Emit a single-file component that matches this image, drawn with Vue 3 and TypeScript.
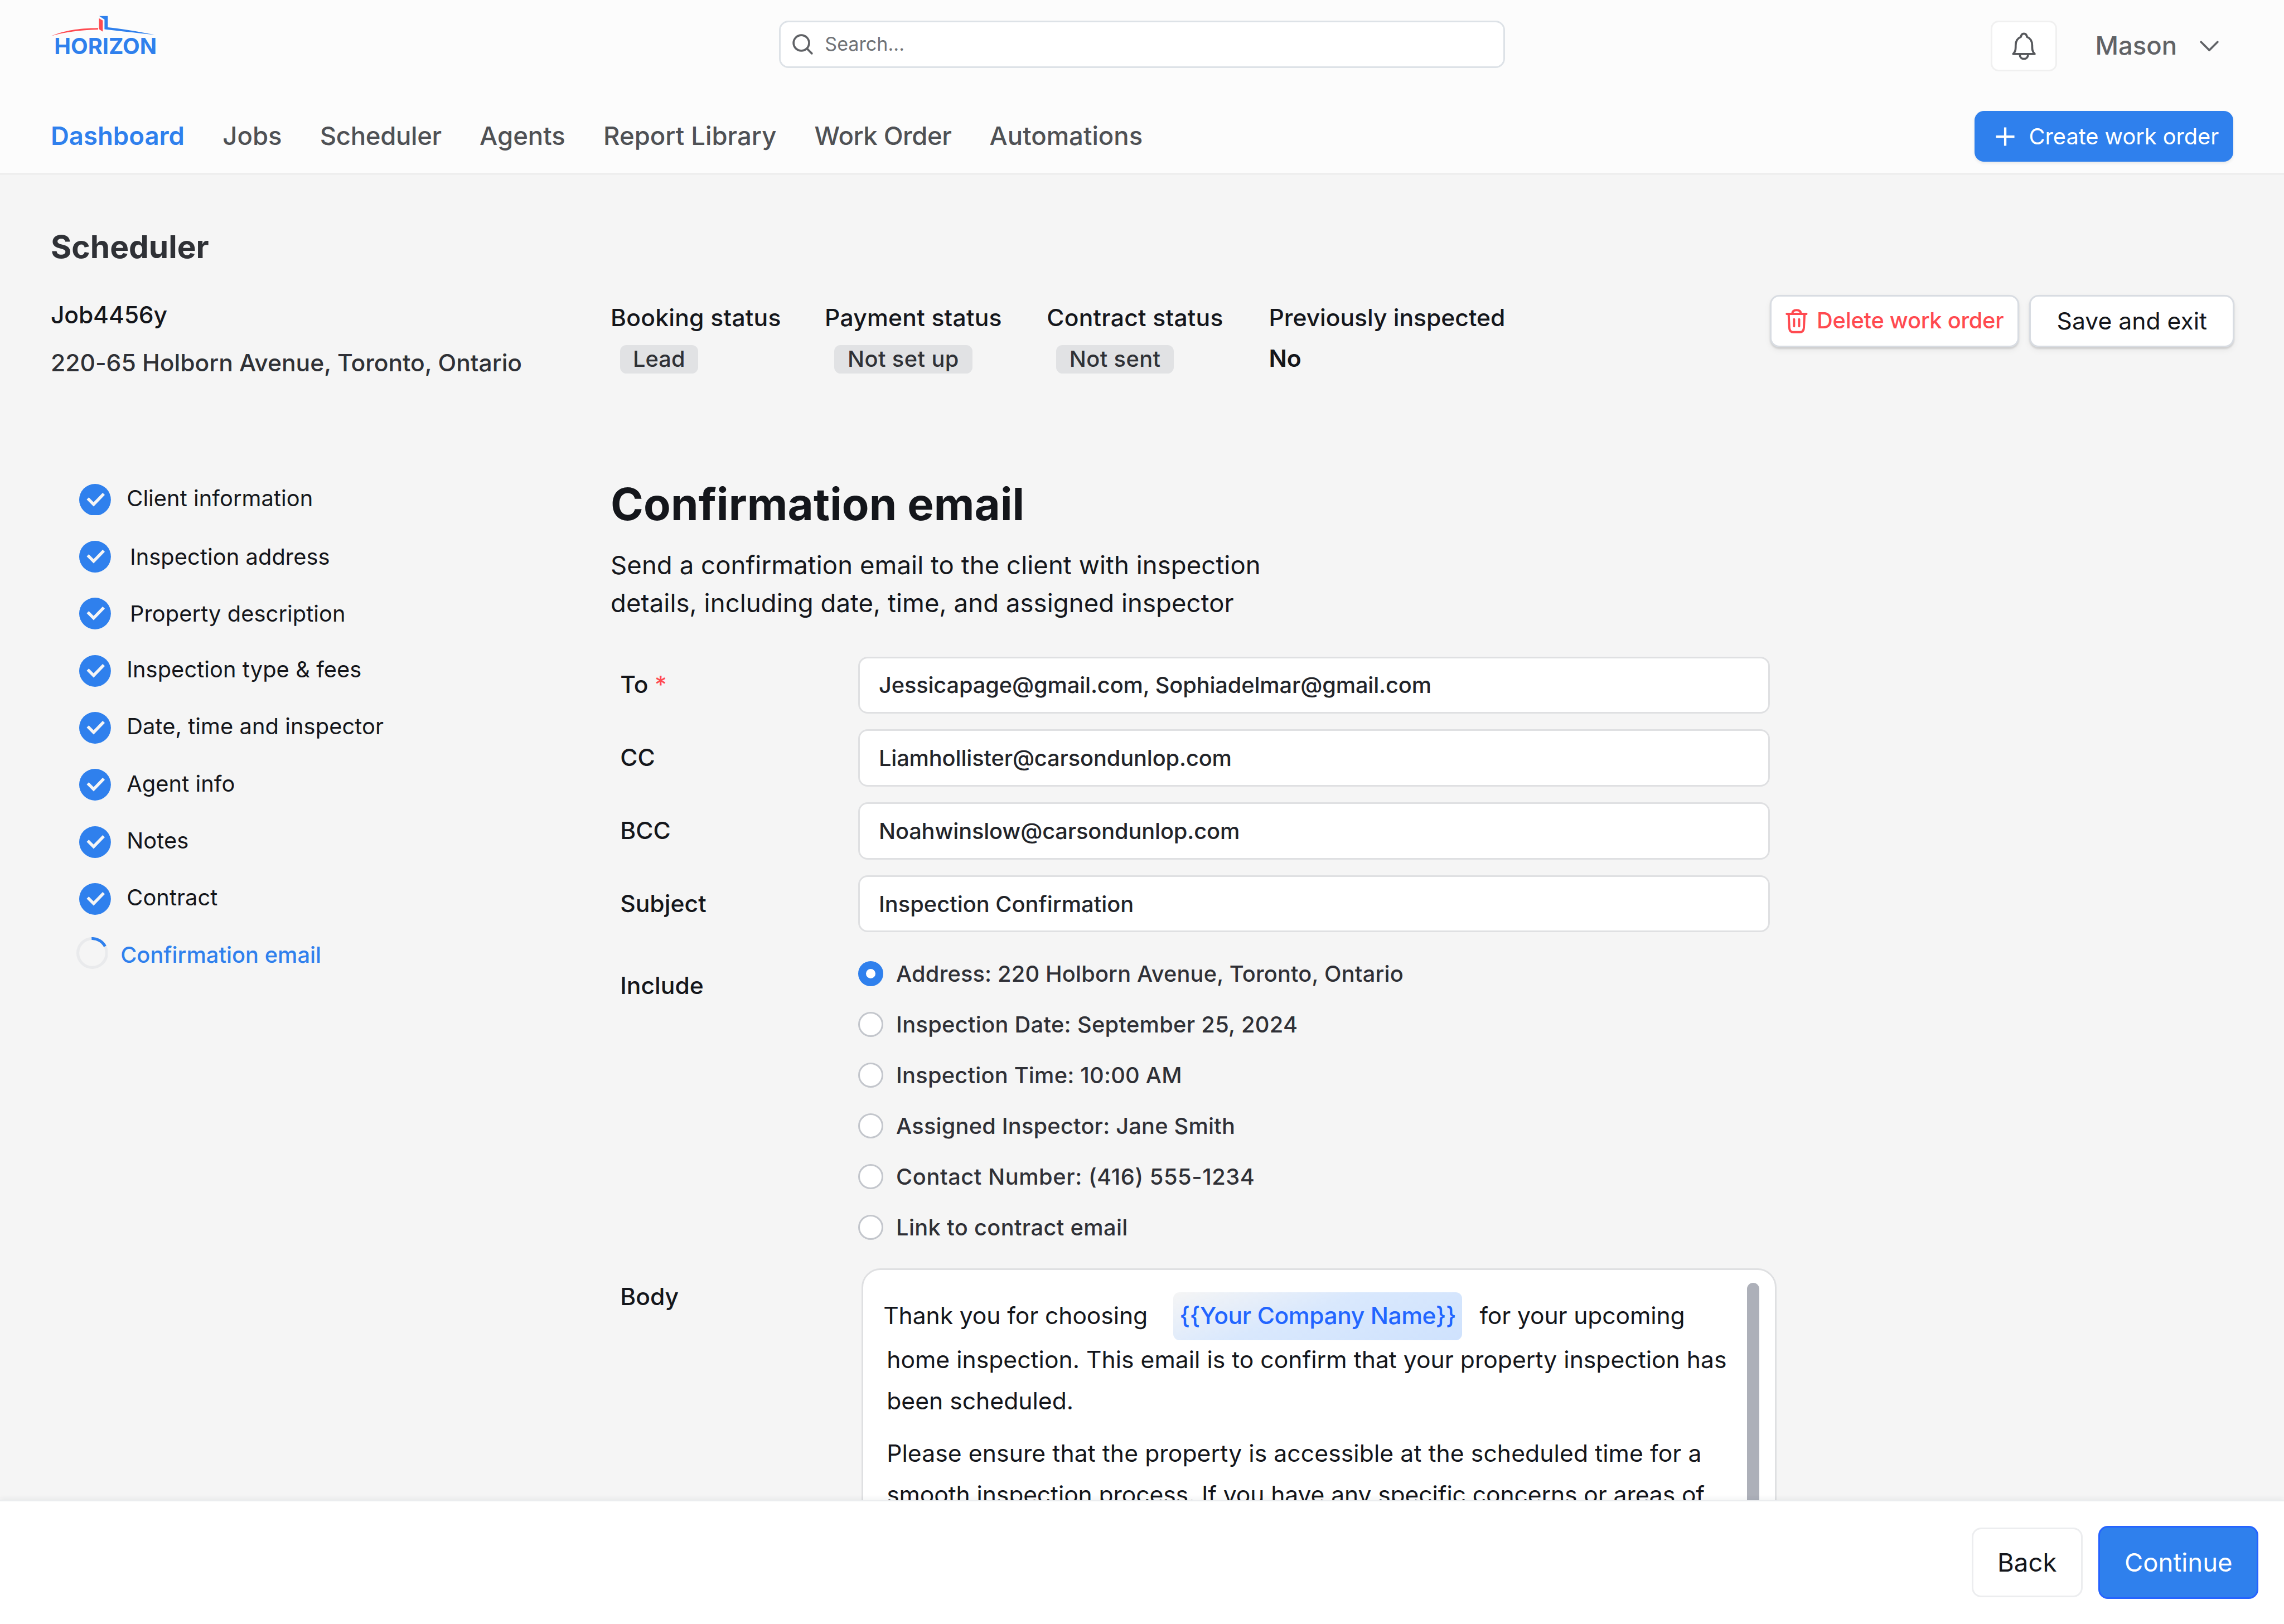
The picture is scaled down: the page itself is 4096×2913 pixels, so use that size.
<script setup lang="ts">
import { ref } from 'vue'

const nav = ['Dashboard', 'Jobs', 'Scheduler', 'Agents', 'Report Library', 'Work Order', 'Automations']

interface Step { label: string; kind?: 'inset' | 'active' }
const steps: Step[] = [
  { label: 'Client information' },
  { label: 'Inspection address', kind: 'inset' },
  { label: 'Property description', kind: 'inset' },
  { label: 'Inspection type & fees' },
  { label: 'Date, time and inspector' },
  { label: 'Agent info' },
  { label: 'Notes' },
  { label: 'Contract' },
  { label: 'Confirmation email', kind: 'active' },
]

const fields = [
  { label: 'To', required: true, email: true, value: 'Jessicapage@gmail.com, Sophiadelmar@gmail.com' },
  { label: 'CC', required: false, email: true, value: 'Liamhollister@carsondunlop.com' },
  { label: 'BCC', required: false, email: true, value: 'Noahwinslow@carsondunlop.com' },
  { label: 'Subject', required: false, email: false, value: 'Inspection Confirmation' },
]

const options = [
  { text: 'Address: 220 Holborn Avenue, Toronto, Ontario', tracking: 0.05 },
  { text: 'Inspection Date: September 25, 2024', tracking: 0.1 },
  { text: 'Inspection Time: 10:00 AM', tracking: 0.07 },
  { text: 'Assigned Inspector: Jane Smith', tracking: 0.06 },
  { text: 'Contact Number: (416) 555-1234', tracking: 0.19 },
  { text: 'Link to contract email', tracking: 0.12 },
]
const selected = ref(0)
const placeholder = '{{Your Company Name}}'
</script>

<template>
  <div class="app">
    <header class="header">
      <div class="topbar">
        <div class="logo">
          <svg class="logo-mark" viewBox="0 0 870 200" aria-hidden="true">
            <path fill="#2f80ed" d="M392 45H457V131C570 142 690 164 812 187C690 176 560 160 432 146V72Z" />
            <path fill="#ff4a50" d="M390 62L419 79V163L390 145Z" />
            <path fill="#ff4a50" d="M27 197C130 155 230 138 384 136V148C240 154 140 165 27 197Z" />
          </svg>
          <span class="logo-text">HORIZON</span>
        </div>
        <div class="search">
          <svg viewBox="0 0 14 14" aria-hidden="true"><circle cx="6" cy="6" r="4.9" /><path d="M9.6 9.6L12.6 12.6" /></svg>
          <span>Search...</span>
        </div>
        <button class="bell">
          <svg viewBox="0 0 18 18" aria-hidden="true">
            <path d="M2.2 14H15.8C14.4 12.6 14.2 11.6 14.2 8.6C14.2 5.8 12.9 4 10.9 3.2C10.7 2 10.1 1.2 9 1.2S7.3 2 7.1 3.2C5.1 4 3.8 5.8 3.8 8.6C3.8 11.6 3.6 12.6 2.2 14Z" />
            <path d="M6.4 14.2C6.4 16 7.5 17.1 9 17.1S11.6 16 11.6 14.2" />
          </svg>
        </button>
        <span class="user">Mason</span>
        <svg class="chev" viewBox="0 0 12 7" aria-hidden="true"><path d="M.8.8L6 6L11.2.8" /></svg>
      </div>
      <div class="navbar">
        <nav>
          <a v-for="(n, i) in nav" :key="n" :class="{ on: i === 0 }">{{ n }}</a>
        </nav>
        <button class="create">
          <svg viewBox="0 0 12 12" aria-hidden="true"><path d="M6 .2V11.8M.2 6H11.8" /></svg>
          <span>Create work order</span>
        </button>
      </div>
    </header>

    <main class="main">
      <h2 class="page-title">Scheduler</h2>
      <section class="summary">
        <div class="job">
          <div class="job-id">Job4456y</div>
          <div class="job-addr">220-65 Holborn Avenue, Toronto, Ontario</div>
        </div>
        <div class="stat s1"><div class="k">Booking status</div><span class="badge b1">Lead</span></div>
        <div class="stat s2"><div class="k">Payment status</div><span class="badge b2">Not set up</span></div>
        <div class="stat s3"><div class="k">Contract status</div><span class="badge b3">Not sent</span></div>
        <div class="stat s4"><div class="k">Previously inspected</div><span class="plain">No</span></div>
        <div class="actions">
          <button class="btn del">
            <svg viewBox="0 0 14 15.5" aria-hidden="true">
              <path d="M.8 3.2H13.2M4.3 3C4.4 1.5 5.2.8 7 .8S9.600 1.5 9.7 3M2 3.4L2.4 11.8C2.5 13.8 3.3 14.7 4.9 14.7H9.1C10.7 14.7 11.5 13.8 11.6 11.8L12 3.4M5.4 6.6V11M8.6 6.6V11" />
            </svg>
            <span>Delete work order</span>
          </button>
          <button class="btn save"><span>Save and exit</span></button>
        </div>
      </section>

      <section class="content">
        <ul class="steps">
          <li v-for="s in steps" :key="s.label" :class="s.kind">
            <svg v-if="s.kind === 'active'" class="dot" viewBox="0 0 20 20" aria-hidden="true">
              <circle cx="10" cy="10" r="9.1" fill="none" stroke="#e9eaec" stroke-width="1.8" />
              <path d="M9.6.9A9.1 9.1 0 0 1 18.1 5.8" fill="none" stroke="#2f80ed" stroke-width="1.8" />
            </svg>
            <svg v-else class="dot" viewBox="0 0 20 20" aria-hidden="true">
              <circle cx="10" cy="10" r="10" fill="#2f80ed" />
              <path d="M5.400 9.200L9.100 12.900L15.500 6.300" fill="none" stroke="#f5f5f5" stroke-width="1.900" />
            </svg>
            <span>{{ s.label }}</span>
          </li>
        </ul>

        <div class="panel">
          <h1>Confirmation email</h1>
          <p class="desc">Send a confirmation email to the client with inspection<br />details, including date, time, and assigned inspector</p>
          <div class="form">
            <div v-for="f in fields" :key="f.label" class="row">
              <label>{{ f.label }}<i v-if="f.required"> *</i></label>
              <div class="input" :class="{ email: f.email }"><span>{{ f.value }}</span></div>
            </div>
            <div class="row group">
              <label class="include">Include</label>
              <div class="radios">
                <div v-for="(o, i) in options" :key="o.text" class="radio" @click="selected = i">
                  <span class="mark" :class="{ on: selected === i }"></span>
                  <span class="txt" :style="{ letterSpacing: o.tracking + 'px' }">{{ o.text }}</span>
                </div>
              </div>
            </div>
            <div class="row group">
              <label class="body-label">Body</label>
              <div class="editor">
                <div class="doc">
                  <div class="first">
                    <span class="lead">Thank you for choosing</span>
                    <span class="token">{{ placeholder }}</span>
                    <span class="tail">for your upcoming</span>
                  </div>
                  <p>home inspection. This email is to confirm that your property inspection has<br />been scheduled.</p>
                  <p><span class="wide">Please ensure that the property is accessible at the scheduled time for a</span><br /><span class="tight">smooth inspection process. If you have any specific concerns or areas of</span></p>
                </div>
                <div class="bar"></div>
              </div>
            </div>
          </div>
        </div>
      </section>
    </main>

    <footer class="footer">
      <button class="back">Back</button>
      <button class="next">Continue</button>
    </footer>
  </div>
</template>

<style>
html, body { margin: 0; overflow: hidden; background: #f5f5f5; }
</style>

<style scoped>
.app {
  zoom: 2.844444;
  width: 1440px; height: 1024.1px;
  display: flex; flex-direction: column; overflow: hidden;
  background: #f5f5f5; color: #14161b;
  font-family: Inter, "Liberation Sans", sans-serif;
  font-optical-sizing: none;
}
.app *, .app *::before { box-sizing: border-box; }
button { font: inherit; margin: 0; padding: 0; border: 0; background: none; color: inherit; display: flex; align-items: center; }
svg { display: block; flex: none; fill: none; }
span, a, label, .k { white-space: nowrap; }

.header { flex: none; height: 110px; background: #fcfcfc; border-bottom: 1px solid #e8e8e8; }
.topbar { display: flex; align-items: flex-start; height: 70px; }
.logo { margin-left: 30px; width: 72.5px; padding-top: 6.25px; }
.logo-mark { width: 72.5px; height: 16.667px; }
.logo-text { display: block; margin: -0.8px 0 0 4.2px; font-weight: 700; font-size: 14px; line-height: 14px; color: #2f80ed; }
.search { margin: 13px 0 0 388.5px; width: 458px; height: 30px; display: flex; align-items: center; background: #fff; border: 1.06px solid #dde2e7; border-radius: 6px; color: #6f7276; font-size: 12px; padding-left: 7px; }
.search svg { width: 14px; height: 14px; stroke: #606266; stroke-width: 1.3; stroke-linecap: round; }
.search span { margin-left: 7px; padding-bottom: .8px; }
.bell { margin: 13px 0 0 306px; width: 42px; height: 32px; justify-content: center; background: #fff; border: 1.06px solid #f0f0f0; border-radius: 5px; }
.bell svg { width: 18px; height: 18px; stroke: #56585c; stroke-width: 1.3; stroke-linejoin: round; }
.user { margin: 19px 0 0 24px; font-size: 16px; line-height: 20px; font-weight: 500; color: #606266; }
.chev { margin: 25.5px 0 0 14.4px; width: 12px; height: 7px; stroke: #606266; stroke-width: 1.3; stroke-linecap: round; }
.navbar { display: flex; justify-content: space-between; padding: 0 32px; height: 32px; align-items: center; }
nav { display: flex; gap: 24px; padding-bottom: .5px; font-size: 16px; font-weight: 500; color: #4f5155; }
nav a.on { color: #2f80ed; font-weight: 600; }
nav a:nth-child(3) { letter-spacing: -.12px; }
nav a:nth-child(6) { letter-spacing: -.18px; }
.create { width: 163px; height: 32px; border-radius: 6px; background: #2f80ed; color: #fff; box-shadow: 0 1px 2px rgba(0,0,0,.08); padding-left: 13.2px; }
.create svg { width: 12px; height: 12px; stroke: #fff; stroke-width: 1.5; }
.create span { margin-left: 9px; font-size: 14px; letter-spacing: -.02px; }

.main { flex: 1; min-height: 0; overflow: hidden; padding: 33.7px 0 0 32px; }
.page-title { margin: 0; font-size: 20px; line-height: 24px; font-weight: 700; color: #2f3136; }
.summary { margin-top: 18.3px; height: 111px; display: flex; align-items: flex-start; font-size: 15px; line-height: 20px; }
.job { width: 353px; padding-top: 2.9px; }
.job-id { font-weight: 500; letter-spacing: -.07px; }
.job-addr { margin-top: 10px; font-weight: 500; letter-spacing: -.02px; color: #2f3136; }
.stat { padding-top: 4.4px; width: 140px; letter-spacing: .07px; }
.s1 { width: 135px; }
.s4 { width: 316px; letter-spacing: -.02px; }
.k { font-weight: 500; }
.badge { margin: 7.1px 0 0 6px; height: 18px; display: flex; align-items: center; justify-content: center; border-radius: 4px; background: #e1e2e4; color: #2f3136; font-size: 14px; font-weight: 500; letter-spacing: .14px; }
.b1 { width: 49px; letter-spacing: 0; }
.b2 { width: 87px; }
.b3 { width: 74px; }
.plain { display: block; margin-top: 7.3px; line-height: 17px; font-weight: 600; }
.actions { display: flex; gap: 6.4px; }
.btn { height: 33.1px; justify-content: center; background: #fff; border: 1.06px solid #d8dce2; border-radius: 6px; box-shadow: 0 1px 1px rgba(0,0,0,.12), 0 2px 4px rgba(0,0,0,.05); font-size: 15px; }
.del { width: 157px; color: #ff4a50; font-size: 14px; font-weight: 500; justify-content: flex-start; padding-left: 8.8px; }
.del svg { width: 14px; height: 15.5px; stroke: #ff4a50; stroke-width: 1.4; stroke-linecap: round; stroke-linejoin: round; }
.del span { margin-left: 5.6px; padding-bottom: .8px; letter-spacing: -.1px; }
.save { width: 129.5px; }

.content { display: flex; align-items: flex-start; }
.steps { width: 353px; list-style: none; margin: 0; padding: 0 0 0 18px; font-size: 14px; letter-spacing: .025px; }
.steps li { display: flex; height: 36px; align-items: center; }
.dot { width: 20px; height: 20px; }
.steps span { margin-left: 9.9px; padding-bottom: 2px; }
.steps .inset span { margin-left: 11.9px; padding-bottom: 0; }
.steps .active { margin: -2px 0 0 -2px; color: #2f80ed; font-weight: 500; letter-spacing: 0; }
.steps .active span { margin-left: 8px; padding: 1.9px 0 0; }

.panel { padding-top: 3.8px; width: 735px; }
h1 { margin: 0; font-size: 28px; line-height: 34px; font-weight: 700; letter-spacing: .03px; }
.desc { margin: 9.6px 0 21.6px; font-size: 16px; line-height: 24px; white-space: nowrap; letter-spacing: .02px; }
.form { display: flex; flex-direction: column; gap: 10px; }
.row { display: flex; align-items: center; }
.row.group { align-items: flex-start; }
label { width: 150px; margin-left: 6px; font-size: 15px; line-height: 20px; font-weight: 500; }
label i { font-style: normal; color: #ff4a50; }
.input { width: 575px; height: 36px; display: flex; align-items: center; padding-left: 12px; background: #fff; border: 1.06px solid #dfe0e2; border-radius: 6px; font-size: 14px; font-weight: 500; color: #222429; }
.input.email { letter-spacing: -.055px; }
.include { padding-top: 13.8px; }
.radio { display: flex; align-items: center; height: 32px; font-size: 14px; font-weight: 500; color: #2f3036; }
.mark { width: 16px; height: 16px; border-radius: 50%; background: #fff; border: 1.06px solid #c3c6cc; }
.mark.on { border: 5px solid #2f80ed; }
.txt { margin-left: 8px; }
.body-label { padding-top: 7.9px; width: 152.2px; }
.editor { width: 576.8px; height: 320px; display: flex; background: #fff; border: 1.06px solid #dfe0e2; border-radius: 12px; font-size: 15px; line-height: 26px; }
.doc { width: 557.1px; padding: 14px 0 0 12.7px; }
.first { display: flex; align-items: center; height: 30px; }
.lead { width: 182.9px; padding-bottom: .6px; letter-spacing: -.04px; }
.token { width: 182px; height: 30px; border-radius: 4px; text-align: center; line-height: 29.4px; font-weight: 500; letter-spacing: -.17px; color: #2265ff; background: linear-gradient(160deg, #f5f5f5 0%, #d9e8fd 45%, #cfe2fd 100%); }
.tail { margin-left: 11px; padding-bottom: .6px; letter-spacing: -.05px; }
.doc p { margin: -.5px 0 7.2px 2.1px; white-space: nowrap; }
.doc p + p { margin-top: 0; }
.wide { letter-spacing: .025px; }
.tight { letter-spacing: -.045px; }
.bar { margin-top: 8px; width: 8px; height: 300px; border-radius: 4px; background: #adb0b9; }

.footer { flex: none; position: relative; height: 78px; display: flex; justify-content: flex-end; align-items: center; gap: 10px; padding: 0 16px .6px 0; background: #fff; border-top: 1px solid #ebedef; box-shadow: 0 -1px 3px rgba(20,30,50,.06); font-size: 16px; }
.footer button { justify-content: center; }
.back { width: 70px; height: 44px; border: 1.06px solid #ecedef; border-radius: 6px; }
.next { width: 101px; height: 46px; border: 1.06px solid #2563ff; border-radius: 6px; background: #2f80ed; color: #fff; }
</style>
